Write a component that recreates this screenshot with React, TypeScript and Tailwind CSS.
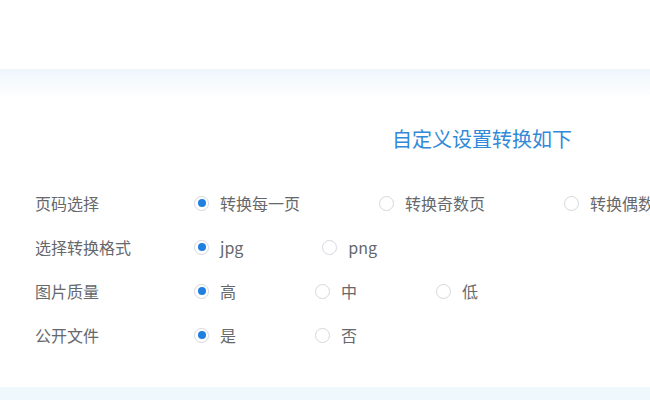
import React from "react";

type Row = { label: string; options: string[] };

const rows: Row[] = [
  { label: "页码选择", options: ["转换每一页", "转换奇数页", "转换偶数页"] },
  { label: "选择转换格式", options: ["jpg", "png"] },
  { label: "图片质量", options: ["高", "中", "低"] },
  { label: "公开文件", options: ["是", "否"] },
];

function Radio({ label, checked }: { label: string; checked: boolean }) {
  return (
    <label className="mr-[79px] flex shrink-0 items-center whitespace-nowrap">
      <span className="flex h-[15px] w-[15px] items-center justify-center rounded-full border border-[#d4d7de] bg-white">
        {checked && <span className="h-[8px] w-[8px] rounded-full bg-[#1f80e2]" />}
      </span>
      <span className="ml-[11px] text-[16px] text-[#66686c]">{label}</span>
    </label>
  );
}

export default function App() {
  return (
    <div
      className="h-[400px] w-full overflow-hidden bg-white"
      style={{ fontFamily: '"Noto Sans CJK SC", "Noto Sans", sans-serif' }}
    >
      <div className="h-[69px] bg-white" />
      <div className="h-[30px] bg-gradient-to-b from-[#eef6fc] to-white" />
      <div className="bg-white pt-[26px]">
        <h2 className="whitespace-nowrap pl-[392px] text-[20px] leading-[28px] text-[#3189d8]">
          自定义设置转换如下
        </h2>
        <div className="mt-[28px] pl-[35px]">
          {rows.map((row) => (
            <div key={row.label} className="flex h-[44px] items-center">
              <div className="w-[159px] shrink-0 text-[16px] text-[#66686c]">{row.label}</div>
              <div className="flex">
                {row.options.map((o, i) => (
                  <Radio key={o} label={o} checked={i === 0} />
                ))}
              </div>
            </div>
          ))}
        </div>
        <div className="h-[30px] bg-white" />
      </div>
      <div className="h-[20px] bg-[#eff8fd]" />
    </div>
  );
}
